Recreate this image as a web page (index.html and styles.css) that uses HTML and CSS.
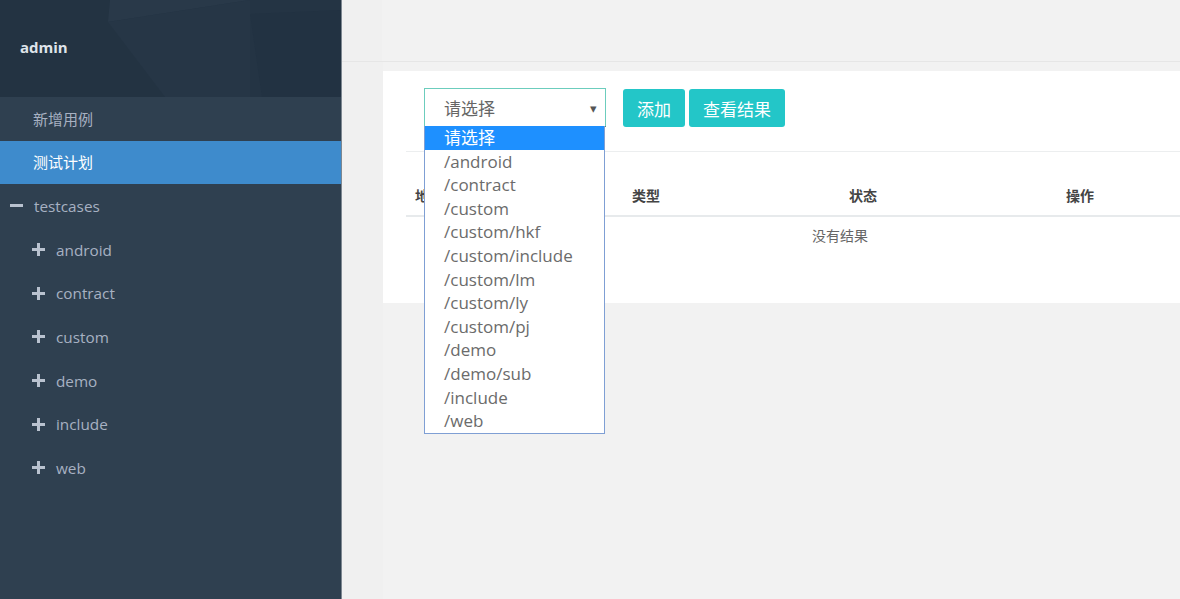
FILE: index.html
```html
<!DOCTYPE html>
<html lang="zh">
<head>
<meta charset="utf-8">
<title>测试计划</title>
<link rel="stylesheet" href="styles.css">
</head>
<body>
<div class="app">
  <aside class="sidebar">
    <div class="profile">
      <svg class="pattern" width="341" height="97" viewBox="0 0 341 97" aria-hidden="true">
        <polygon points="0,0 110,0 165,97 0,97" fill="#233342"/>
        <polygon points="110,0 250,0 108,22" fill="#293949"/>
        <polygon points="108,22 250,0 250,97 165,97" fill="#263646"/>
        <polygon points="250,0 341,0 341,97 250,97" fill="#243444"/>
        <polygon points="250,14 341,10 341,97 262,97" fill="#223242"/>
      </svg>
      <span class="profile-name">admin</span>
    </div>
    <nav class="menu">
      <a class="menu-item">新增用例</a>
      <a class="menu-item active">测试计划</a>
    </nav>
    <ul class="tree">
      <li class="tree-row root"><span class="ico minus"></span>testcases</li>
      <li class="tree-row child"><span class="ico plus"></span>android</li>
      <li class="tree-row child"><span class="ico plus"></span>contract</li>
      <li class="tree-row child"><span class="ico plus"></span>custom</li>
      <li class="tree-row child"><span class="ico plus"></span>demo</li>
      <li class="tree-row child"><span class="ico plus"></span>include</li>
      <li class="tree-row child"><span class="ico plus"></span>web</li>
    </ul>
  </aside>
  <main class="main">
    <div class="topbar"></div>
    <div class="content">
      <div class="gutter"></div>
      <div class="body">
        <section class="panel">
          <div class="toolbar">
            <div class="select-wrap">
              <div class="select"><span>请选择</span><span class="caret">▾</span></div>
              <ul class="options">
                <li class="opt selected">请选择</li>
                <li class="opt">/android</li>
                <li class="opt">/contract</li>
                <li class="opt">/custom</li>
                <li class="opt">/custom/hkf</li>
                <li class="opt">/custom/include</li>
                <li class="opt">/custom/lm</li>
                <li class="opt">/custom/ly</li>
                <li class="opt">/custom/pj</li>
                <li class="opt">/demo</li>
                <li class="opt">/demo/sub</li>
                <li class="opt">/include</li>
                <li class="opt">/web</li>
              </ul>
            </div>
            <button class="btn">添加</button>
            <button class="btn">查看结果</button>
          </div>
          <div class="divider"></div>
          <table class="grid">
            <thead>
              <tr><th>地址</th><th>类型</th><th>状态</th><th>操作</th></tr>
            </thead>
            <tbody>
              <tr><td colspan="4" class="empty">没有结果</td></tr>
            </tbody>
          </table>
        </section>
      </div>
    </div>
  </main>
</div>
</body>
</html>
```

FILE: styles.css
```css
* { box-sizing: border-box; }
html, body { margin: 0; padding: 0; height: 100%; overflow: hidden; }
body {
  font-family: "Open Sans", "Noto Sans CJK SC", sans-serif;
  background: #f3f3f4;
  color: #676a6c;
}
.app { display: flex; height: 599px; width: 1180px; overflow: hidden; }

.sidebar {
  width: 342px;
  flex: none;
  background: #2f4050;
  border-right: 1px solid #7d8791;
  display: flex;
  flex-direction: column;
}
.profile {
  position: relative;
  height: 97px;
  display: flex;
  align-items: center;
  padding-left: 20px;
  background: #243444;
  overflow: hidden;
}
.pattern { position: absolute; left: 0; top: 0; }
.profile-name {
  position: relative;
  color: #dfe4ea;
  font-weight: 700;
  font-size: 15px;
  margin-top: -4px;
}
.menu { display: flex; flex-direction: column; }
.menu-item {
  height: 44px;
  line-height: 44px;
  padding-left: 33px;
  font-size: 15px;
  color: #a7b1c2;
}
.menu-item.active { background: #3e8bcc; color: #fff; height: 43px; line-height: 43px; }

.tree { list-style: none; margin: 0; padding: 0; }
.tree-row {
  height: 43.7px;
  display: flex;
  align-items: center;
  font-size: 15.3px;
  color: #a7b1c2;
}
.tree-row.root { padding-left: 10px; }
.tree-row.child { padding-left: 32px; }
.ico { position: relative; width: 13px; height: 13px; margin-right: 11px; flex: none; }
.ico::before {
  content: "";
  position: absolute;
  left: 0; right: 0; top: 5px; height: 3px;
  background: #b9c2cf;
}
.ico.plus::after {
  content: "";
  position: absolute;
  top: 0; bottom: 0; left: 5px; width: 3px;
  background: #b9c2cf;
}

.main { flex: 1; display: flex; flex-direction: column; min-width: 0; background: #f0f0f0; }
.topbar { height: 62px; flex: none; border-bottom: 1px solid #e6e6e6; background: linear-gradient(to right, #f0f0f0 40px, #f2f2f2 40px); }
.content { flex: 1; display: flex; }
.gutter { width: 41px; flex: none; background: #f0f0f0; }
.body { flex: 1; background: #f2f2f2; padding-top: 9px; min-width: 0; }

.panel {
  background: #fff;
  width: 900px;
  padding: 17px 0 46px 0;
}
.toolbar { display: flex; align-items: flex-start; padding-left: 41px; }
.select-wrap { position: relative; margin-right: 17px; }
.select {
  width: 182px;
  height: 39px;
  border: 1px solid #6ccdbd;
  display: flex;
  align-items: center;
  justify-content: space-between;
  padding: 0 8px 0 19px;
  font-size: 17px;
  color: #666;
  border-bottom-color: #444;
}
.caret { font-size: 13px; color: #555; }
.options {
  position: absolute;
  left: 0; top: 38px;
  width: 181px;
  margin: 0; padding: 0;
  list-style: none;
  background: #fff;
  border: 1px solid #7f9fd4;
  border-top: none;
  z-index: 10;
}
.opt {
  height: 23.6px;
  line-height: 23.6px;
  font-size: 17px;
  padding-left: 19px;
  color: #6b6b6b;
  white-space: nowrap;
}
.opt.selected { background: #1e90ff; color: #fff; }

.btn {
  height: 38px;
  border: none;
  border-radius: 3px;
  background: #23c6c8;
  color: #fff;
  font-family: inherit;
  font-size: 17px;
  padding: 0 14px;
  margin: 1px 4px 0 0;
}

.divider { height: 1px; background: #eceeef; margin: 24px 0 0 23px; }

.grid {
  border-collapse: collapse;
  width: 868px;
  margin: 22px 0 0 23px;
  font-size: 14px;
  table-layout: fixed;
}
.grid th {
  text-align: left;
  height: 42px;
  padding: 0 10px 0 9px;
  font-weight: 700;
  color: #444;
  border-bottom: 2px solid #e7eaec;
  vertical-align: middle;
}
.grid td.empty {
  text-align: center;
  font-size: 14px;
  color: #666;
  padding: 8px 0 10px;
  line-height: 22px;
}
```
